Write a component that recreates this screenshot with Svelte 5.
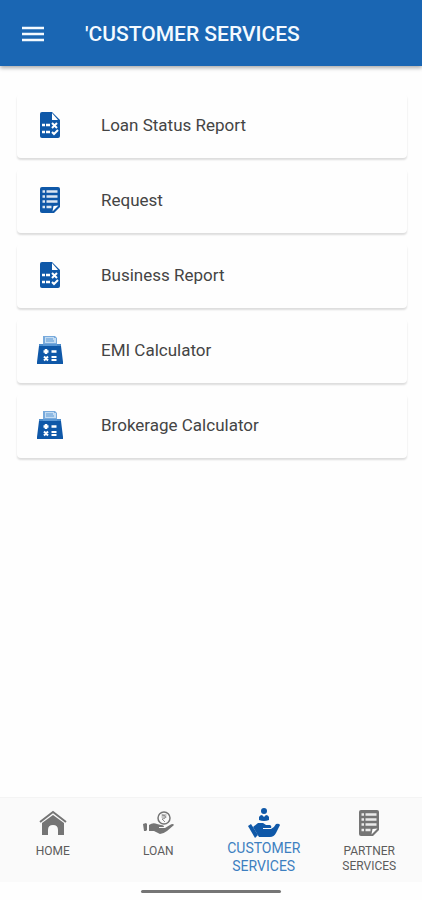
<script>
    const services = [
        { title: "Loan Status Report", icon: "report" },
        { title: "Request", icon: "request" },
        { title: "Business Report", icon: "report" },
        { title: "EMI Calculator", icon: "calculator" },
        { title: "Brokerage Calculator", icon: "calculator" },
    ];

    const tabs = [
        { id: "home", lines: ["HOME"] },
        { id: "loan", lines: ["LOAN"] },
        { id: "customer", lines: ["CUSTOMER", "SERVICES"] },
        { id: "partner", lines: ["PARTNER", "SERVICES"] },
    ];

    let active = $state("customer");
</script>

{#snippet sheet()}
    <path fill="currentColor" d="M2 0h16q2 0 2 2v18l-6 6H2q-2 0-2-2V2q0-2 2-2z" />
    <path
        fill="none"
        stroke="#fff"
        stroke-opacity="0.85"
        stroke-width="2.6"
        d="M2.500 4.500h2.500M6.500 4.500h11M2.500 9.500h2.500M6.500 9.500h11M2.500 14.500h2.500M6.500 14.500h11M2.500 20h2.500M6.500 20h5"
    />
    <path fill="#fff" d="M12.500 24.500l1-5.500 5-.5z" />
{/snippet}

<div class="screen">
    <header>
        <button class="menu" aria-label="Menu">
            <svg width="22" height="16" viewBox="0 0 22 16">
                <path stroke="currentColor" stroke-width="2.500" d="M0 2h22M0 8h22M0 14h22" />
            </svg>
        </button>
        <h1>'CUSTOMER SERVICES</h1>
    </header>

    <main>
        {#each services as service}
            <button class="card">
                <span class="icon">
                    {#if service.icon === "report"}
                        <svg width="20" height="26" viewBox="0 0 20 26">
                            <path fill="currentColor" d="M2 0h10l8 8v16q0 2-2 2H2q-2 0-2-2V2q0-2 2-2z" />
                            <path fill="#fff" d="M12 1l6 7h-6z" />
                            <path fill="none" stroke="#fff" stroke-width="2.500" d="M2 13h3M6 13h4M2 20h3M6 20h4" />
                            <path fill="none" stroke="#fff" stroke-width="2" d="M12 11l5 5M17 11l-5 5M12 20l2 2 4-4" />
                        </svg>
                    {:else if service.icon === "request"}
                        <svg width="20" height="26" viewBox="0 0 20 26">
                            {@render sheet()}
                        </svg>
                    {:else}
                        <svg width="26" height="30" viewBox="0 0 26 30">
                            <path fill="#78aadc" d="M6 1h12l2 2v8H6z" />
                            <path fill="#c4dcf2" d="M8 2h9v1h2v5H8z" />
                            <path fill="none" stroke="#5b98d5" d="M9 4h7M9 6h8" />
                            <path fill="#4b8bcb" d="M2 9h4v2h14V9h4v3H2z" />
                            <path fill="currentColor" d="M2 11h22l2 16v2H0v-2z" />
                            <path fill="#5b98d5" d="M6 9h14v2H6z" />
                            <path
                                fill="none"
                                stroke="#fff"
                                stroke-width="2.500"
                                d="M6.500 16.500h5M9 14v5M14.500 16.500h5"
                            />
                            <path
                                fill="none"
                                stroke="#fff"
                                stroke-width="2"
                                d="M7 21.500l4 4M11 21.500l-4 4M14.500 22h5M14.500 25h5"
                            />
                        </svg>
                    {/if}
                </span>
                {service.title}
            </button>
        {/each}
    </main>

    <nav>
        {#each tabs as tab}
            <button class="tab" class:active={tab.id === active} onclick={() => (active = tab.id)}>
                <span class="tab-icon">
                    {#if tab.id === "home"}
                        <svg width="28" height="26" viewBox="0 0 28 26">
                            <path fill="none" stroke="currentColor" stroke-width="2" d="M1 12L14 2l13 10" />
                            <path
                                fill="currentColor"
                                d="M14 5l11 8v12h-6v-5q0-5-5-5t-5 5v5H3V13z"
                            />
                        </svg>
                    {:else if tab.id === "loan"}
                        <svg width="32" height="26" viewBox="0 0 32 26">
                            <circle cx="22" cy="8" r="6" fill="none" stroke="currentColor" stroke-width="1.500" />
                            <path
                                fill="none"
                                stroke="currentColor"
                                stroke-width="0.8"
                                d="M19.500 5h5M19.500 7h5M20 5q3.500 0 3.500 2t-3.500 2l3 3"
                            />
                            <path
                                fill="currentColor"
                                d="M1 14l3-1 1 1v6l-1 1H2zM7 15q4-3 8-1l4 1q3 0 3 2l-5 0v1h6l5-3q3-2 4 0l-7 6q-4 3-7 3l-6-3H7z"
                            />
                        </svg>
                    {:else if tab.id === "customer"}
                        <svg width="32" height="30" viewBox="0 0 32 30">
                            <circle cx="16" cy="3" r="3" fill="currentColor" />
                            <path fill="currentColor" d="M11 12V9q1-2 3-2l2 2 2-2q2 0 3 2v3q-5 2-10 0z" />
                            <path fill="currentColor" d="M0 18l3-2 7 11-3 3z" />
                            <path
                                fill="currentColor"
                                d="M5 19l5-4h5l3 2h4q2 1 1 3h-8v1h8q3-1 5-5 3-1 4 1l-4 8q-2 4-6 4H11z"
                            />
                        </svg>
                    {:else}
                        <svg width="20" height="26" viewBox="0 0 20 26">
                            {@render sheet()}
                        </svg>
                    {/if}
                </span>
                <span class="label">
                    {#each tab.lines as line}
                        <span>{line}</span>
                    {/each}
                </span>
            </button>
        {/each}
    </nav>

    <div class="gesture"></div>
</div>

<style>
    :global(body) {
        background: #fefefe;
        font-family: Roboto, sans-serif;
    }

    .screen {
        display: flex;
        flex-direction: column;
        min-height: 100vh;
    }

    button {
        border: 0;
        padding: 0;
        font: inherit;
        color: inherit;
        background: none;
        cursor: pointer;
    }

    svg {
        display: block;
    }

    header {
        display: flex;
        align-items: center;
        gap: 41px;
        height: 66px;
        padding: 2px 22px 0;
        box-sizing: border-box;
        color: #f4faff;
        background: #1a66b3;
        box-shadow: 0 2px 4px #0005;
    }

    h1 {
        margin: 0;
        font-size: 21px;
        font-weight: 500;
        line-height: 24px;
    }

    /* Service list */

    main {
        flex: 1;
        display: flex;
        flex-direction: column;
        gap: 11px;
        padding: 28px 15px 28px 17px;
    }

    .card {
        display: flex;
        align-items: center;
        gap: 31px;
        height: 64px;
        padding: 0 13px 2px;
        border-radius: 4px;
        font-size: 17px;
        line-height: 20px;
        color: #444;
        background: #fefefe;
        box-shadow: 0 2px 2px #0002;
    }

    .icon {
        display: grid;
        place-items: center;
        width: 40px;
        color: #0f58a8;
    }

    /* Bottom navigation */

    nav {
        display: grid;
        grid-template-columns: repeat(4, 1fr);
        height: 85px;
        background: #fafafa;
        border-top: 1px solid #f4f4f4;
        box-sizing: border-box;
    }

    .tab {
        display: flex;
        flex-direction: column;
        align-items: center;
        gap: 5px;
        padding-top: 9px;
        font-size: 12px;
        line-height: 15px;
        color: #757575;
    }

    .tab-icon {
        display: grid;
        place-items: center;
        height: 32px;
    }

    .label {
        display: flex;
        flex-direction: column;
        color: #5c5c5c;
    }

    .active {
        gap: 0;
        font-size: 14px;
        line-height: 18px;
        color: #0f58a8;
    }

    .active .label {
        color: #3d7fc0;
    }

    .gesture {
        align-self: center;
        width: 140px;
        height: 3px;
        margin: 8px 0 7px;
        border-radius: 2px;
        background: #757575;
    }
</style>
